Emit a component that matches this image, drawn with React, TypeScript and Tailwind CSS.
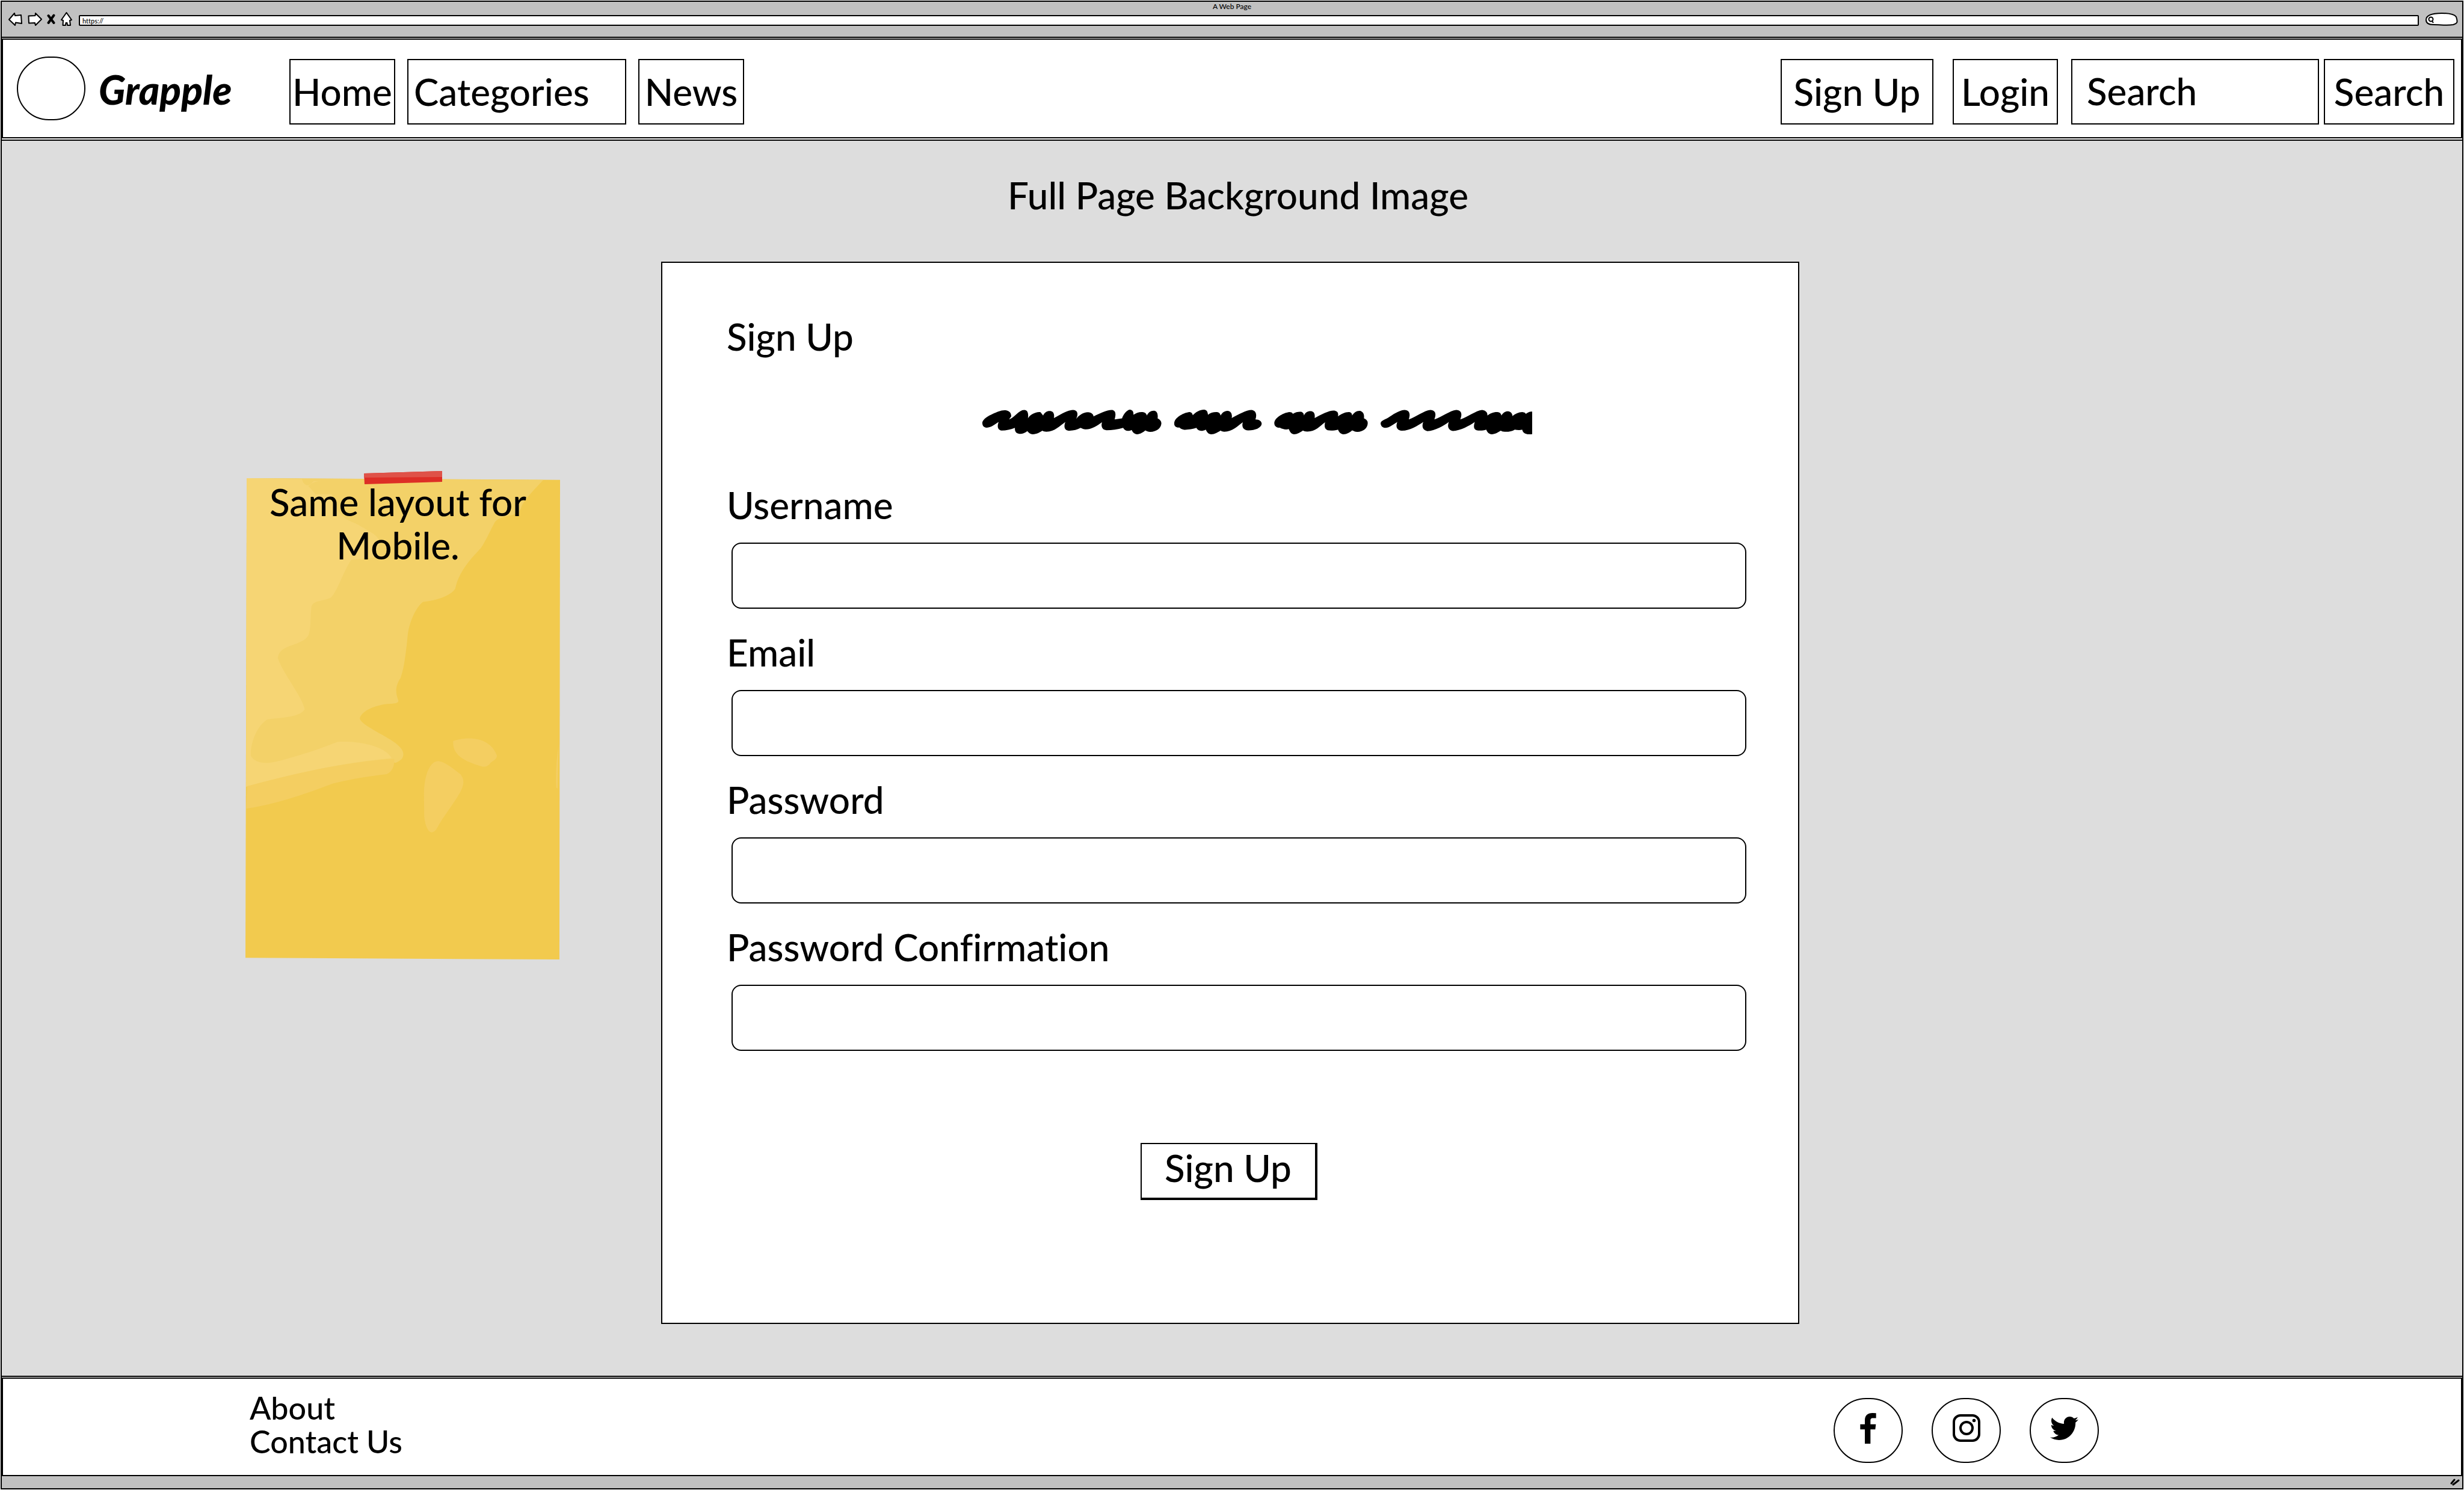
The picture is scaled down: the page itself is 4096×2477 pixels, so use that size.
import React from "react";

const navBox =
  "flex h-[109px] items-center border-2 border-black bg-white whitespace-nowrap";

function BrowserBar() {
  return (
    <div className="border-b-2 border-black bg-[#c1c1c1]">
      <p className="text-center text-xs leading-4">A Web Page</p>
      <div className="flex h-[24px] items-end pl-[11px] pr-[7px]">
        <div className="flex w-[117px] items-end justify-between pr-[11px]">
          <button aria-label="Back">
            <svg className="h-[22px] w-[23px]" viewBox="0 0 23 22" fill="#fff" stroke="#000" strokeWidth="2" strokeLinejoin="round">
              <path d="M1 11.500 L10 1 L11 5 L21 4 L22 18 L12 16.500 L11 21 Z" />
            </svg>
          </button>
          <button aria-label="Forward">
            <svg className="h-[22px] w-[24px]" viewBox="0 0 24 22" fill="#fff" stroke="#000" strokeWidth="2" strokeLinejoin="round">
              <path d="M23 11 L13 1 L12.500 5 L1.500 5.500 L2 17.500 L12 17 L13 21 Z" />
            </svg>
          </button>
          <button aria-label="Stop">
            <svg className="h-[22px] w-[14px]" viewBox="0 0 14 22" fill="none" stroke="#000" strokeWidth="4" strokeLinecap="round">
              <path d="M2.500 5 L11.500 17 M11.500 4.500 L2.500 17" />
            </svg>
          </button>
          <button aria-label="Home page">
            <svg className="h-[23px] w-[19px]" viewBox="0 0 19 23" fill="#fff" stroke="#000" strokeWidth="2" strokeLinejoin="round">
              <path d="M9.500 1 L18 13 L15 14 L16 22 L11 22 L10.500 18 L8.500 18 L8 22 L3.500 22 L4 14 L1 13 Z" />
            </svg>
          </button>
        </div>
        <input
          aria-label="Address"
          defaultValue="https://"
          className="h-[18px] min-w-0 flex-1 rounded-[2px] border-2 border-black bg-white px-1 text-[11px] leading-3 outline-none"
        />
        <svg className="ml-[11px] h-[22px] w-[54px]" viewBox="0 0 54 22" stroke="#000" strokeWidth="2">
          <path fill="#fff" d="M1 12 C1 4 12 1 27 1 C40 1 48 3 51 7 C54 16 53 18 46 20 C36 22 26 20 13 20 C5 20 1 17 1 12 Z" />
          <circle cx="9" cy="11" r="3.500" fill="none" />
          <path fill="none" d="M11 14 L13 17" />
        </svg>
      </div>
      <div className="h-[18px]" />
    </div>
  );
}

function Header() {
  return (
    <header className="mt-px flex h-[166px] justify-between border-2 border-black bg-white pl-[23px] pr-[11px]">
      <div className="flex">
        <a href="#home" className="flex w-[453px] pt-[28px]">
          <span className="h-[106px] w-[114px] rounded-full border-2 border-black" />
          <span className="pl-[22px] pt-[19px] text-[66px] font-black italic leading-[72px]">Grapple</span>
        </a>
        <nav className="flex gap-5 pt-[32px]">
          <a href="#home" className={navBox + " w-[176px] justify-center"}>Home</a>
          <a href="#categories" className={navBox + " w-[364px] pl-[9px]"}>Categories</a>
          <a href="#news" className={navBox + " w-[176px] justify-center"}>News</a>
        </nav>
      </div>
      <div className="flex gap-[22px] pt-[32px]">
        <div className="flex gap-8">
          <a href="#signup" className={navBox + " w-[254px] justify-center"}>Sign Up</a>
          <a href="#login" className={navBox + " w-[175px] justify-center"}>Login</a>
        </div>
        <form className="flex gap-2">
          <input
            aria-label="Search"
            placeholder="Search"
            className={navBox + " w-[412px] px-6 pb-1 outline-none placeholder:text-black placeholder:opacity-100"}
          />
          <button type="button" className={navBox + " w-[217px] justify-center"}>Search</button>
        </form>
      </div>
    </header>
  );
}

function Note() {
  return (
    <aside className="relative mt-[360px] h-[800px]">
      <svg className="absolute inset-0 h-full w-full" viewBox="52 61 1466 1480" preserveAspectRatio="none">
        <path fill="#f2ca4e" d="M58 61 L1518 66 L1515 1541 L52 1536 Z" />
        <path
          fill="#f3d168"
          d="M58 61 L1440 66 C1400 95 1360 120 1340 145 C1332 165 1320 170 1290 175 C1250 180 1230 185 1215 195 C1190 225 1175 250 1150 275 C1100 310 1045 350 1030 400 C1010 425 920 440 880 441 C850 455 815 500 808 545 C800 600 790 650 775 675 C750 700 750 720 765 745 C765 755 740 754 700 756 C640 763 590 780 585 800 C590 820 700 850 750 875 C790 895 795 910 780 925 C760 935 750 938 744 935 C560 940 300 970 60 1012 Z"
        />
        <path
          fill="#f6d574"
          d="M58 61 L315 64 C325 85 345 90 370 70 L405 70 C405 95 390 105 375 110 L455 110 C480 190 540 190 580 205 C640 230 670 235 680 260 L650 305 L545 312 C510 345 480 410 450 428 C415 440 370 435 360 455 C352 490 360 520 345 545 C310 580 210 570 203 614 C225 660 320 735 328 772 C300 800 200 797 155 803 C110 820 75 870 77 915 C100 940 150 940 200 932 C320 912 400 892 480 872 C560 868 700 880 733 922 C500 935 280 970 55 1010 Z"
        />
        <path fill="#f3d168" d="M345 85 Q370 70 405 70 Q410 95 380 112 Q360 95 345 85 Z" />
        <path fill="#f4ce61" d="M60 1008 C280 970 500 935 745 924 C748 945 735 965 710 971 C630 977 550 985 460 1000 C340 1030 190 1065 56 1077 Z" />
        <path fill="#f4ce61" d="M1020 869 C1110 850 1200 865 1224 915 C1220 930 1200 930 1190 940 C1175 950 1160 950 1140 945 C1080 932 1015 915 1020 869 Z" />
        <path fill="#f4ce61" d="M884 1030 C885 975 910 930 952 931 C990 935 1025 958 1055 972 C1075 990 1070 1005 1050 1030 C1020 1065 980 1095 942 1140 C915 1165 890 1140 885 1100 Z" />
        <path fill="#f4ce61" d="M1511 885 C1500 930 1497 970 1500 1013 L1507 1015 Z" />
      </svg>
      <svg className="absolute -top-3 left-[197px] h-[22px] w-[130px]" viewBox="0 0 130 22" preserveAspectRatio="none">
        <path fill="#dd2e26" d="M0 4 L130 0 L130 18 L1 22 Z" />
        <path fill="#df5248" d="M0 4 L130 0 L130 10 L0 11 Z" />
      </svg>
      <p className="relative pt-[3px] pr-4 text-center leading-[72px]">
        Same layout for
        <br />
        Mobile.
      </p>
    </aside>
  );
}

function Scribble() {
  return (
    <svg className="ml-[425px] mt-[86px] h-[41px] w-[914px]" viewBox="40 70 1484 146" preserveAspectRatio="none" aria-hidden="true">
      <path d="M40 150 C40 125 60 100 85 80 C95 70 118 65 118 110 L112 128 C125 122 138 72 153 72 C163 72 165 95 163 122 C168 100 185 80 197 85 L204 105 C208 85 215 76 224 78 C233 82 235 100 233 120 C250 100 270 72 285 72 C300 74 298 105 293 125 C300 105 312 85 325 85 C335 87 340 98 340 110 C355 95 375 72 390 72 C402 76 400 105 397 128 L417 122 C420 100 430 70 439 70 C447 74 448 85 448 100 C455 90 462 83 472 84 C480 86 483 95 484 105 C488 85 495 75 504 76 C514 80 514 105 513 122 C520 130 524 140 523 155 C522 180 510 202 493 202 C488 202 484 198 480 193 C475 203 465 216 458 216 C450 214 446 205 443 190 C435 198 425 200 420 178 C405 188 390 192 375 192 C362 190 360 165 363 145 C350 165 335 187 320 187 C312 187 310 182 305 178 C295 190 285 195 272 195 C260 190 260 165 264 143 C250 165 235 200 213 201 C208 201 205 199 202 195 C195 205 187 216 176 216 C168 214 165 205 161 196 C158 205 150 213 140 213 C130 211 127 195 128 178 C115 188 105 194 92 194 C80 190 80 165 84 143 C75 155 65 175 52 177 C42 175 40 160 40 150 Z" />
      <path d="M558 150 C558 120 580 90 598 84 C604 84 607 92 608 103 C615 85 628 70 638 70 C647 72 648 85 649 100 C655 88 665 83 673 84 C680 86 682 95 683 105 C688 85 695 76 703 77 C712 80 715 100 713 120 C730 100 752 72 767 72 C780 76 781 105 777 128 C788 128 794 140 794 155 C792 180 775 194 757 193 C742 190 740 165 743 145 C730 165 715 201 693 201 C688 201 685 197 683 194 C675 205 667 216 658 216 C650 214 647 205 643 188 C638 195 632 196 628 195 C622 192 619 185 618 178 C608 184 595 190 585 189 C578 187 575 182 572 176 C562 178 557 165 558 150 Z" />
      <path d="M828 150 C828 120 850 90 868 84 C874 84 877 88 878 95 C885 84 895 81 902 83 C906 88 908 95 908 105 C912 85 919 77 928 79 C937 84 938 100 937 120 C955 98 975 74 990 75 C1001 80 1001 95 1000 110 C1008 95 1020 83 1030 84 C1036 86 1038 95 1038 105 C1044 85 1050 75 1060 77 C1070 84 1071 105 1070 122 C1078 130 1081 140 1080 155 C1079 180 1068 202 1052 202 C1046 202 1043 197 1038 193 C1032 205 1023 216 1015 216 C1006 214 1002 200 1000 188 C990 194 980 195 972 192 C963 185 963 165 965 145 C950 168 940 200 917 200 C911 200 908 197 905 194 C898 205 890 216 881 216 C873 214 870 200 867 185 C860 190 850 186 843 177 C833 178 828 165 828 150 Z" />
      <path d="M1115 150 C1116 135 1125 130 1135 118 C1148 100 1163 75 1179 72 C1195 74 1195 100 1191 128 C1210 115 1232 75 1249 72 C1265 74 1265 100 1260 128 C1280 115 1302 75 1319 72 C1335 74 1335 100 1330 128 C1350 115 1372 75 1389 72 C1400 75 1404 90 1403 105 C1410 92 1420 83 1430 84 C1438 86 1440 95 1441 105 C1446 85 1453 78 1460 80 C1468 84 1470 95 1471 108 C1478 94 1488 85 1497 84 C1504 85 1505 90 1507 95 C1512 86 1518 82 1524 82 L1524 215 C1510 218 1500 214 1497 188 C1490 193 1483 190 1477 188 C1470 198 1460 202 1450 201 C1444 201 1442 198 1439 195 C1432 205 1424 216 1415 216 C1406 214 1402 200 1400 188 C1392 194 1382 196 1374 192 C1365 185 1366 165 1369 143 C1355 165 1330 195 1310 196 C1296 190 1295 165 1299 143 C1285 165 1262 196 1241 197 C1227 190 1226 165 1230 143 C1215 165 1195 194 1172 195 C1156 190 1156 165 1160 143 C1150 155 1140 177 1127 178 C1118 176 1115 162 1115 150 Z" />
    </svg>
  );
}

const fields = [
  { id: "username", label: "Username", type: "text" },
  { id: "email", label: "Email", type: "email" },
  { id: "password", label: "Password", type: "password" },
  { id: "confirm", label: "Password Confirmation", type: "password" },
];

function SignUpCard() {
  return (
    <form className="border-2 border-black bg-white pb-[204px] pl-[107px] pr-[86px] pt-[86px]">
      <h1 className="leading-[72px]">Sign Up</h1>
      <Scribble />
      <div className="mt-[81px] flex flex-col gap-[36px]">
        {fields.map((f) => (
          <div key={f.id} className="flex flex-col gap-[27px]">
            <label htmlFor={f.id} className="leading-[72px]">{f.label}</label>
            <input
              id={f.id}
              type={f.type}
              className="ml-2 h-[110px] rounded-2xl border-2 border-black bg-white px-6 outline-none"
            />
          </div>
        ))}
      </div>
      <div className="mt-[153px] flex justify-center pr-[26px]">
        <button type="button" className="h-[95px] w-[294px] border-2 border-b-4 border-r-4 border-black bg-white pb-3 leading-[72px]">
          Sign Up
        </button>
      </div>
    </form>
  );
}

const social =
  "flex h-[108px] w-[115px] items-center justify-center rounded-full border-2 border-black pb-2";

function Footer() {
  return (
    <footer className="mt-px flex h-[164px] items-start justify-between border-2 border-black bg-white pl-[410px] pr-[602px] pt-5">
      <nav className="flex flex-col text-[52px] leading-[56px]">
        <a href="#about">About</a>
        <a href="#contact">Contact Us</a>
      </nav>
      <div className="flex gap-12 pt-3">
        <a href="#facebook" aria-label="Facebook" className={social}>
          <svg className="h-[51px] w-[27px]" viewBox="236 279 81 179" preserveAspectRatio="none">
            <path d="M316 280 L316 309 L300 309 C290 309 288 315 288 325 L288 345 L315 345 L312 375 L288 375 L288 458 L260 458 L260 375 L237 375 L237 345 L260 345 L260 322 C260 293 274 279 298 279 Z" />
          </svg>
        </a>
        <a href="#instagram" aria-label="Instagram" className={social}>
          <svg className="h-[46px] w-[46px]" viewBox="0 0 46 46">
            <rect x="2" y="2" width="42" height="42" rx="11" fill="none" stroke="#000" strokeWidth="4" />
            <circle cx="23" cy="23" r="10" fill="none" stroke="#000" strokeWidth="4" />
            <circle cx="35.500" cy="10.500" r="2.800" />
          </svg>
        </a>
        <a href="#twitter" aria-label="Twitter" className={social}>
          <svg className="h-[39px] w-[47px]" viewBox="0 48 512 416" preserveAspectRatio="none">
            <path d="M459.370 151.716c.325 4.548.325 9.097.325 13.645 0 138.720-105.583 298.558-298.558 298.558-59.452 0-114.680-17.219-161.137-47.106 8.447.974 16.568 1.299 25.340 1.299 49.055 0 94.213-16.568 130.274-44.832-46.132-.975-84.792-31.188-98.112-72.772 6.498.974 12.995 1.624 19.818 1.624 9.421 0 18.843-1.300 27.614-3.573-48.081-9.747-84.143-51.980-84.143-102.985v-1.299c13.969 7.797 30.214 12.670 47.431 13.319-28.264-18.843-46.781-51.005-46.781-87.391 0-19.492 5.197-37.360 14.294-52.954 51.655 63.675 129.300 105.258 216.365 109.807-1.624-7.797-2.599-15.918-2.599-24.040 0-57.828 46.782-104.934 104.934-104.934 30.213 0 57.502 12.670 76.670 33.137 23.715-4.548 46.456-13.320 66.599-25.340-7.798 24.366-24.366 44.833-46.132 57.827 21.117-2.273 41.584-8.122 60.426-16.243-14.292 20.791-32.161 39.308-52.628 54.253z" />
          </svg>
        </a>
      </div>
    </footer>
  );
}

export default function App() {
  return (
    <div className="flex min-h-screen flex-col bg-white p-px font-['Lato',sans-serif] text-[62px] font-medium text-black [font-variant-ligatures:none]">
      <div className="flex flex-1 flex-col border-2 border-black">
        <BrowserBar />
        <Header />
        <main className="mt-[2px] flex-1 border-y-2 border-black bg-[#dddddd] pb-[85px] pt-[54px]">
          <h2 className="pl-5 text-center leading-[72px]">Full Page Background Image</h2>
          <div className="mt-[75px] grid grid-cols-[405fr_523fr_168fr_1892fr_1102fr] items-start">
            <div className="col-start-2"><Note /></div>
            <div className="col-start-4"><SignUpCard /></div>
          </div>
        </main>
        <Footer />
        <div className="flex h-[20px] items-center justify-end bg-[#c1c1c1] pr-1">
          <svg className="h-3 w-4" viewBox="0 0 16 12" stroke="#000" strokeWidth="3" strokeLinecap="round">
            <path d="M2 8 L7 2 M5 10 L14 3" />
          </svg>
        </div>
      </div>
    </div>
  );
}
